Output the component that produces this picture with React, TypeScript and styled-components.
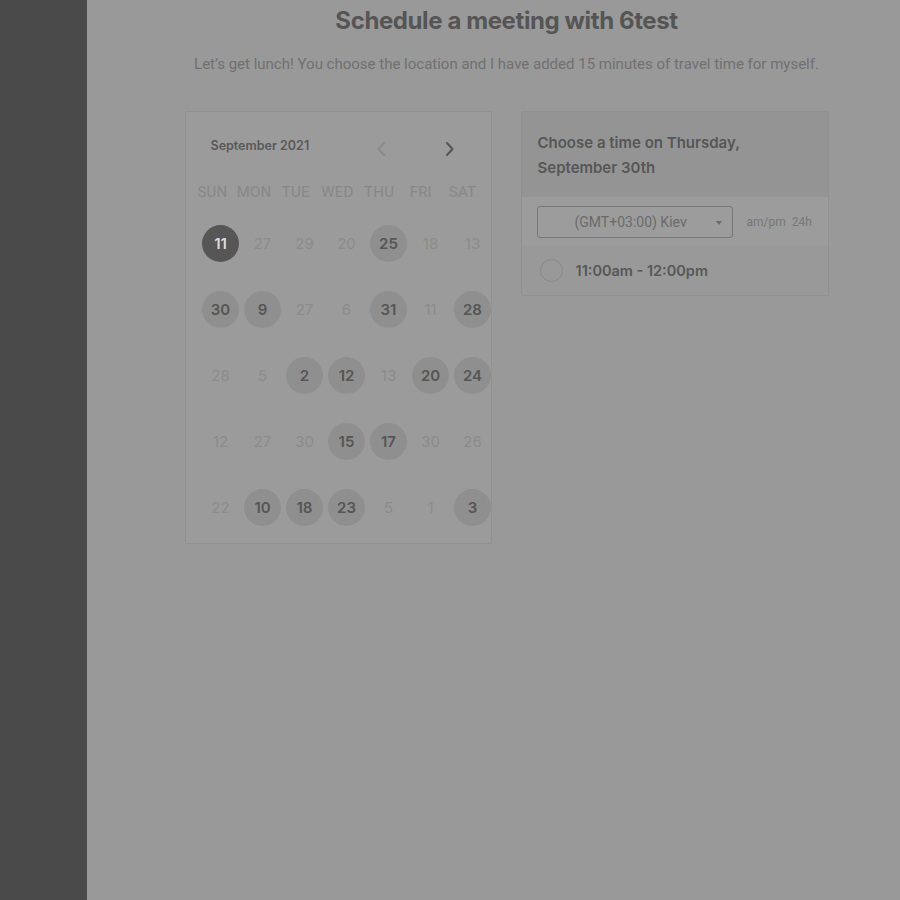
import React from "react";
import styled, { createGlobalStyle } from "styled-components";

const Global = createGlobalStyle`
  html, body { margin: 0; padding: 0; background: #999999; }
  body { font-family: Roboto, "Noto Sans", sans-serif; }
  * { box-sizing: border-box; }
`;

const Page = styled.div`
  display: flex;
  width: 900px;
  height: 900px;
  overflow: hidden;
`;

const Sidebar = styled.aside`
  width: 87px;
  flex: none;
  background: #4a4a4a;
`;

const Main = styled.main`
  flex: 1;
  background: #999999;
  display: flex;
  flex-direction: column;
  align-items: center;
  padding-left: 26px;
  padding-top: 6px;
`;

const Title = styled.h1`
  margin: 0;
  font-family: Inter, "Noto Sans", sans-serif;
  font-weight: 700;
  font-size: 24px;
  line-height: 30px;
  letter-spacing: -0.4px;
  color: #555555;
`;

const Subtitle = styled.p`
  margin: 18px 0 0;
  font-family: Roboto, sans-serif;
  font-size: 15px;
  line-height: 20px;
  color: #707070;
`;

const Cards = styled.div`
  display: flex;
  align-items: flex-start;
  gap: 29px;
  margin-top: 37px;
`;

const Card = styled.section<{ $w: number }>`
  width: ${(p) => p.$w}px;
  border: 1px solid #919191;
  border-radius: 2px;
  background: #9b9b9b;
  overflow: hidden;
`;

const CalHeader = styled.div`
  display: flex;
  align-items: center;
  height: 22px;
  margin-top: 22px;
  padding-left: 25px;
`;

const MonthLabel = styled.div`
  font-family: Inter, sans-serif;
  font-weight: 600;
  font-size: 12.5px;
  color: #585858;
  width: 162px;
`;

const NavBtn = styled.button<{ $active?: boolean }>`
  border: none;
  background: transparent;
  padding: 0;
  margin-top: 8px;
  width: 16px;
  height: 18px;
  display: flex;
  align-items: center;
  justify-content: center;
  color: ${(p) => (p.$active ? "#555555" : "#8a8a8a")};
  margin-right: ${(p) => (p.$active ? "0" : "53px")};
`;

const DayNames = styled.div`
  display: grid;
  grid-template-columns: repeat(7, 41.7px);
  padding-left: 6px;
  margin-top: 26px;
  height: 20px;
  align-items: center;
`;

const DayName = styled.div`
  text-align: center;
  font-family: Roboto, sans-serif;
  font-size: 15px;
  color: #878787;
  letter-spacing: 0.2px;
`;

const Dates = styled.div`
  display: grid;
  grid-template-columns: repeat(7, 42px);
  grid-auto-rows: 66px;
  padding-left: 14px;
  margin-top: 8px;
  padding-bottom: 3px;
`;

const DateCell = styled.div`
  display: flex;
  align-items: center;
  justify-content: center;
`;

const DateDot = styled.div<{ $state: "sel" | "avail" | "off" }>`
  width: 37px;
  height: 37px;
  border-radius: 50%;
  display: flex;
  align-items: center;
  justify-content: center;
  font-family: Inter, Roboto, sans-serif;
  font-size: 15px;
  font-weight: ${(p) => (p.$state === "off" ? 400 : 600)};
  background: ${(p) =>
    p.$state === "sel" ? "#565656" : p.$state === "avail" ? "#8f8f8f" : "transparent"};
  color: ${(p) =>
    p.$state === "sel" ? "#dcdcdc" : p.$state === "avail" ? "#555555" : "#8b8b8b"};
`;

const TimeHeader = styled.div`
  background: #949494;
  padding: 18px 16px 17px;
  font-family: Inter, sans-serif;
  font-weight: 600;
  font-size: 15px;
  line-height: 25px;
  color: #565656;
`;

const TzRow = styled.div`
  background: #9c9c9c;
  height: 49px;
  display: flex;
  align-items: center;
  padding-left: 15px;
`;

const Select = styled.div`
  width: 196px;
  height: 32px;
  border: 1px solid #767676;
  border-radius: 3px;
  display: flex;
  align-items: center;
  position: relative;
  padding-left: 37px;
  font-family: Roboto, sans-serif;
  font-size: 14px;
  color: #6a6a6a;
`;

const Caret = styled.span`
  position: absolute;
  right: 10px;
  top: 14px;
  width: 0;
  height: 0;
  border-left: 3.5px solid transparent;
  border-right: 3.5px solid transparent;
  border-top: 4px solid #6a6a6a;
`;

const Format = styled.div`
  margin-left: 14px;
  font-family: Roboto, sans-serif;
  font-size: 12px;
  color: #777777;
  word-spacing: 3px;
`;

const SlotRow = styled.div`
  height: 49px;
  display: flex;
  align-items: center;
  padding-left: 18px;
  background: #999999;
`;

const Radio = styled.span`
  width: 23px;
  height: 23px;
  border-radius: 50%;
  border: 1.5px solid #888888;
  flex: none;
`;

const SlotText = styled.span`
  margin-left: 13px;
  font-family: Inter, sans-serif;
  font-weight: 600;
  font-size: 14.5px;
  color: #575757;
`;

type S = "sel" | "avail" | "off";
const rows: [string, S][][] = [
  [["11", "sel"], ["27", "off"], ["29", "off"], ["20", "off"], ["25", "avail"], ["18", "off"], ["13", "off"]],
  [["30", "avail"], ["9", "avail"], ["27", "off"], ["6", "off"], ["31", "avail"], ["11", "off"], ["28", "avail"]],
  [["28", "off"], ["5", "off"], ["2", "avail"], ["12", "avail"], ["13", "off"], ["20", "avail"], ["24", "avail"]],
  [["12", "off"], ["27", "off"], ["30", "off"], ["15", "avail"], ["17", "avail"], ["30", "off"], ["26", "off"]],
  [["22", "off"], ["10", "avail"], ["18", "avail"], ["23", "avail"], ["5", "off"], ["1", "off"], ["3", "avail"]],
];

const Chevron = ({ dir }: { dir: "left" | "right" }) => (
  <svg width="10" height="16" viewBox="0 0 10 16" fill="none">
    <path
      d={dir === "left" ? "M8 2 L2.5 8 L8 14" : "M2 2 L7.5 8 L2 14"}
      stroke="currentColor"
      strokeWidth="2"
      strokeLinecap="round"
      strokeLinejoin="round"
    />
  </svg>
);

export default function App() {
  return (
    <>
      <Global />
      <Page>
        <Sidebar />
        <Main>
          <Title>Schedule a meeting with 6test</Title>
          <Subtitle>
            Let’s get lunch! You choose the location and I have added 15 minutes of travel time for myself.
          </Subtitle>
          <Cards>
            <Card $w={307}>
              <CalHeader>
                <MonthLabel>September 2021</MonthLabel>
                <NavBtn aria-label="previous">
                  <Chevron dir="left" />
                </NavBtn>
                <NavBtn $active aria-label="next">
                  <Chevron dir="right" />
                </NavBtn>
              </CalHeader>
              <DayNames>
                {["SUN", "MON", "TUE", "WED", "THU", "FRI", "SAT"].map((d) => (
                  <DayName key={d}>{d}</DayName>
                ))}
              </DayNames>
              <Dates>
                {rows.flat().map(([n, s], i) => (
                  <DateCell key={i}>
                    <DateDot $state={s}>{n}</DateDot>
                  </DateCell>
                ))}
              </Dates>
            </Card>
            <Card $w={308}>
              <TimeHeader>
                Choose a time on Thursday,
                <br />
                September 30th
              </TimeHeader>
              <TzRow>
                <Select>
                  (GMT+03:00) Kiev
                  <Caret />
                </Select>
                <Format>am/pm 24h</Format>
              </TzRow>
              <SlotRow>
                <Radio />
                <SlotText>11:00am - 12:00pm</SlotText>
              </SlotRow>
            </Card>
          </Cards>
        </Main>
      </Page>
    </>
  );
}
